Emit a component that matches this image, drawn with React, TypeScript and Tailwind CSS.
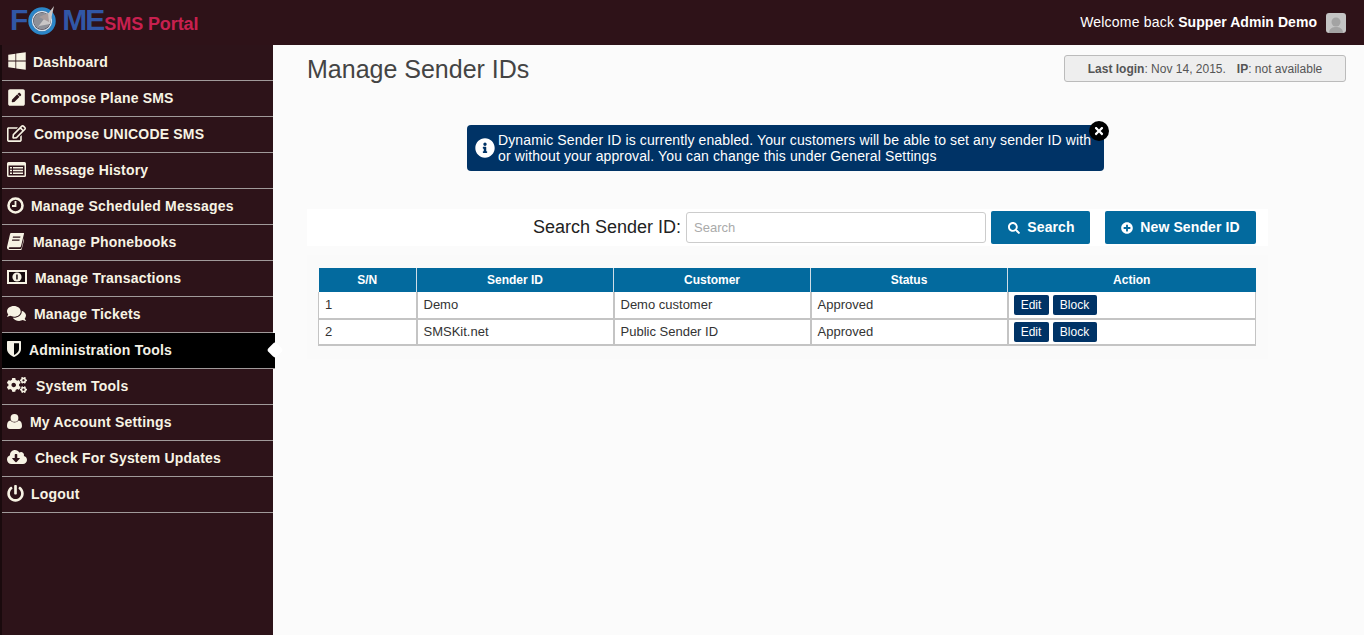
import React from 'react';
import {
  FaWindows, FaPenSquare, FaRegEdit, FaComments, FaCogs, FaCloudDownloadAlt, FaPowerOff, FaSearch, FaPlusCircle, FaInfoCircle, FaTimes,
} from 'react-icons/fa';

function ListIcon() {
  return (
    <svg width="19" height="15" viewBox="0 0 19 15" fill="currentColor">
      <path d="M1.5 0h16A1.5 1.5 0 0 1 19 1.5v12a1.5 1.5 0 0 1-1.5 1.5h-16A1.5 1.5 0 0 1 0 13.5v-12A1.5 1.5 0 0 1 1.5 0zM1.5 3.5v10h16v-10z" fillRule="evenodd" />
      <path d="M3 5h2v1.4H3zM6 5h10v1.4H6zM3 7.8h2v1.4H3zM6 7.8h10v1.4H6zM3 10.6h2V12H3zM6 10.6h10V12H6z" />
    </svg>
  );
}

function ClockIcon() {
  return (
    <svg width="17" height="17" viewBox="0 0 17 17" fill="none" stroke="currentColor">
      <circle cx="8.5" cy="8.5" r="7" strokeWidth="2.6" />
      <path d="M8.5 4v5H5" strokeWidth="1.8" />
    </svg>
  );
}

function BookIcon() {
  return (
    <svg width="17" height="17" viewBox="0 0 17 17" fill="currentColor">
      <path d="M4 0h12.5c.5 0 .6.4.5.8l-3 12.4c-.2.7-.6 1-1.3 1H3c-.8 0-1.200.4-1.200 1s.4.8 1.200.8h10.500c.5 0 .8-.3 1-.8l2.500-10.200.5.3-2.800 11c-.1.500-.5.700-1 .700H2.500C1 17 0 16 0 14.500c0-.4.1-.8.200-1.200L3 1.200C3.200.4 3.500 0 4 0zM6 3.500l-.3 1.300h7.500l.3-1.300zM5.200 6.500l-.3 1.300h7.500l.3-1.300z" fillRule="evenodd" />
    </svg>
  );
}

function MoneyIcon() {
  return (
    <svg width="20" height="14" viewBox="0 0 20 14">
      <path d="M0 0h20v14H0zM2 2v10h16V2z" fill="currentColor" fillRule="evenodd" />
      <path d="M2 2h16v10H2z" fill="#150a0c" />
      <circle cx="10" cy="7" r="4.600" fill="currentColor" />
      <path d="M9.200 4.400h1.500v5.200H9.200z" fill="#150a0c" />
    </svg>
  );
}

function ShieldIcon() {
  return (
    <svg width="14" height="16" viewBox="0 0 14 16">
      <path d="M0 1c0-.6.4-1 1-1h12c.6 0 1 .4 1 1v7c0 4-4 6.800-7 8-3-1.200-7-4-7-8z" fill="currentColor" />
      <path d="M7 2.200h5v5.800c0 2.800-2.500 4.800-5 6z" fill="#000" />
    </svg>
  );
}

function UserIcon() {
  return (
    <svg width="15" height="15" viewBox="0 0 15 15" fill="currentColor">
      <circle cx="7.500" cy="3.900" r="3.900" />
      <path d="M3.400 6.600c1 1.200 2.500 1.900 4.100 1.900s3.100-.7 4.100-1.900C13.800 7 15 8.700 15 12c0 2-1.200 3-2.800 3H2.800C1.200 15 0 14 0 12c0-3.300 1.200-5 3.400-5.400z" />
    </svg>
  );
}

const menu = [
  { label: 'Dashboard', icon: <FaWindows className="text-[20px]" />, gap: 'w-[31px]' },
  { label: 'Compose Plane SMS', icon: <FaPenSquare className="text-[19px]" />, gap: 'w-[29px]' },
  { label: 'Compose UNICODE SMS', icon: <FaRegEdit className="text-[19px]" />, gap: 'w-[32px]' },
  { label: 'Message History', icon: <ListIcon />, gap: 'w-[32px]' },
  { label: 'Manage Scheduled Messages', icon: <ClockIcon />, gap: 'w-[29px]' },
  { label: 'Manage Phonebooks', icon: <BookIcon />, gap: 'w-[31px]' },
  { label: 'Manage Transactions', icon: <MoneyIcon />, gap: 'w-[33px]' },
  { label: 'Manage Tickets', icon: <FaComments className="text-[19px]" />, gap: 'w-[32px]' },
  { label: 'Administration Tools', icon: <ShieldIcon />, gap: 'w-[27px]', active: true },
  { label: 'System Tools', icon: <FaCogs className="text-[20px]" />, gap: 'w-[34px]' },
  { label: 'My Account Settings', icon: <UserIcon />, gap: 'w-[28px]' },
  { label: 'Check For System Updates', icon: <FaCloudDownloadAlt className="text-[20px]" />, gap: 'w-[33px]' },
  { label: 'Logout', icon: <FaPowerOff className="text-[17px]" />, gap: 'w-[29px]' },
];

const rows = [
  { sn: '1', id: 'Demo', customer: 'Demo customer', status: 'Approved', h: 'h-[27px]' },
  { sn: '2', id: 'SMSKit.net', customer: 'Public Sender ID', status: 'Approved', h: 'h-[26px]' },
];

function Logo() {
  return (
    <div className="flex items-baseline pl-[10px] h-[45px] pt-[5px]">
      <span className="text-[#3157a6] font-bold text-[30px] leading-[30px]">F</span>
      <svg width="32" height="32" viewBox="0 0 32 32" className="self-start -ml-[1px] mr-[3px]">
        <circle cx="15" cy="16" r="12" fill="none" stroke="#2b86c9" strokeWidth="3.500" />
        <circle cx="15" cy="16" r="9.500" fill="none" stroke="#cfe3f2" strokeWidth="1.500" />
        <circle cx="15" cy="16" r="8.500" fill="#8d8f97" />
        <path d="M7 27 L27 1 L23 19 L12 21 Z" fill="#c9c6c6" />
        <path d="M12 12 L21 8 L22 17 Z" fill="#a89c9c" />
      </svg>
      <span className="text-[#3157a6] font-bold text-[30px] leading-[30px] tracking-[-2px]">ME</span>
      <span className="text-[#c8204f] font-bold text-[18px] leading-[20px] ml-[1px] tracking-[-0.1px]">SMS Portal</span>
    </div>
  );
}

function Sidebar() {
  return (
    <aside className="w-[273px] shrink-0 bg-[#2d1319] border-l-2 border-[#1a0a0d]">
      {menu.map((item) => (
        <div
          key={item.label}
          className={`relative h-[36px] flex items-center border-b border-[#a09a9a] text-[14px] font-bold tracking-[0.2px] ${
            item.active ? 'bg-black text-[#f4f1e6] w-[273px]' : 'text-[#f7f3e4]'
          }`}
        >
          <span className={`${item.gap} pl-[5px] shrink-0 flex items-center -mt-[3px]`}>{item.icon}</span>
          <span>{item.label}</span>
          {item.active && (
            <span className="absolute -right-[6px] top-[11px] w-[12px] h-[12px] rotate-45 rounded-[3px] bg-white" />
          )}
        </div>
      ))}
    </aside>
  );
}

export default function App() {
  return (
    <div className="h-[635px] flex flex-col overflow-hidden font-['Liberation_Sans',Arial,sans-serif] bg-[#fbfbfb]">
      <header className="h-[45px] shrink-0 bg-[#2e1218] flex items-center justify-between">
        <Logo />
        <div className="flex items-center pr-[18px] text-[14px] text-white">
          <span className="tracking-[0.2px]">
            Welcome back <b className="tracking-[0.05px]">Supper Admin Demo</b>
          </span>
          <span className="ml-[9px] w-[20px] h-[20px] rounded-[3px] bg-[#c4c4c4] flex items-end justify-center overflow-hidden">
            <svg width="16" height="18" viewBox="0 0 16 18">
              <circle cx="8" cy="7" r="4.500" fill="#a3a3a3" />
              <path d="M1 18 C1 13 5 12 8 12 C11 12 15 13 15 18 Z" fill="#a3a3a3" />
            </svg>
          </span>
        </div>
      </header>

      <div className="flex-1 flex min-h-0">
        <Sidebar />
        <main className="flex-1 pl-[34px] pr-[18px]">
          <div className="flex items-start justify-between pt-[10px]">
            <h1 className="text-[25px] leading-[28px] text-[#444444]">Manage Sender IDs</h1>
            <div className="w-[282px] h-[27px] bg-[#eeeeee] border border-[#bbbbbb] rounded-[3px] flex items-center justify-center text-[12px] text-[#555555]">
              <span><b>Last login</b>: Nov 14, 2015.</span>
              <span className="ml-[11px]"><b>IP</b>: not available</span>
            </div>
          </div>

          <div className="relative mt-[42px] ml-[160px] w-[637px] h-[46px] bg-[#003366] rounded-[4px] text-white text-[14px] leading-[16px] tracking-[0.12px] flex items-center pl-[8px]">
            <FaInfoCircle className="text-[20px] shrink-0 mr-[3px]" />
            <p className="whitespace-nowrap">
              Dynamic Sender ID is currently enabled. Your customers will be able to set any sender ID with<br />
              or without your approval. You can change this under General Settings
            </p>
            <span className="absolute -right-[5px] -top-[4px] w-[20px] h-[20px] rounded-full bg-black text-white flex items-center justify-center text-[12px]">
              <FaTimes />
            </span>
          </div>

          <div className="mt-[38px] w-[961px] h-[37px] bg-white flex items-center justify-end pr-[12px]">
            <span className="text-[18px] text-[#222222]">Search Sender ID:</span>
            <input
              placeholder="Search"
              className="ml-[5px] w-[300px] h-[31px] bg-white border border-[#cccccc] rounded-[3px] px-[7px] text-[13px] placeholder:text-[#aaaaaa] outline-none"
            />
            <button className="ml-[5px] w-[99px] h-[33px] bg-[#036a9e] rounded-[2px] text-white text-[14px] font-bold tracking-[0.1px] flex items-center justify-center gap-[7px] pl-[2px]">
              <FaSearch className="text-[12px]" /> Search
            </button>
            <button className="ml-[15px] w-[151px] h-[33px] bg-[#036a9e] rounded-[2px] text-white text-[14px] font-bold tracking-[0.1px] flex items-center justify-center gap-[7px]">
              <FaPlusCircle className="text-[12px]" /> New Sender ID
            </button>
          </div>

          <div className="mt-[9px] w-[961px] pl-[12px] pr-[12px] py-[13px] bg-[#fafafa]">
            <table className="-ml-[1px] w-[937px] table-fixed border-collapse text-[13px] text-[#333333]">
              <colgroup>
                <col className="w-[98px]" />
                <col className="w-[197px]" />
                <col className="w-[197px]" />
                <col className="w-[197px]" />
                <col className="w-[248px]" />
              </colgroup>
              <thead>
                <tr className="h-[24px] bg-[#036a9e] text-white text-[12px] font-bold">
                  {['S/N', 'Sender ID', 'Customer', 'Status', 'Action'].map((h) => (
                    <th key={h} className="border-x border-[#cfdde6] first:border-l-0 last:border-r-0 font-bold">{h}</th>
                  ))}
                </tr>
              </thead>
              <tbody>
                {rows.map((r) => (
                  <tr key={r.sn} className={`${r.h} bg-white`}>
                    <td className="border-2 border-[#c4c4c4] border-l border-t-0 px-[6px]">{r.sn}</td>
                    <td className="border-2 border-[#c4c4c4] border-t-0 px-[6px]">{r.id}</td>
                    <td className="border-2 border-[#c4c4c4] border-t-0 px-[6px]">{r.customer}</td>
                    <td className="border-2 border-[#c4c4c4] border-t-0 px-[6px]">{r.status}</td>
                    <td className="border-2 border-[#c4c4c4] border-t-0 border-r px-[5px]">
                      <div className="flex gap-[4px]">
                        <button className="h-[20px] w-[35px] bg-[#003366] text-white text-[12px] rounded-[2px]">Edit</button>
                        <button className="h-[20px] w-[44px] bg-[#003366] text-white text-[12px] rounded-[2px]">Block</button>
                      </div>
                    </td>
                  </tr>
                ))}
              </tbody>
            </table>
          </div>
        </main>
      </div>
    </div>
  );
}
